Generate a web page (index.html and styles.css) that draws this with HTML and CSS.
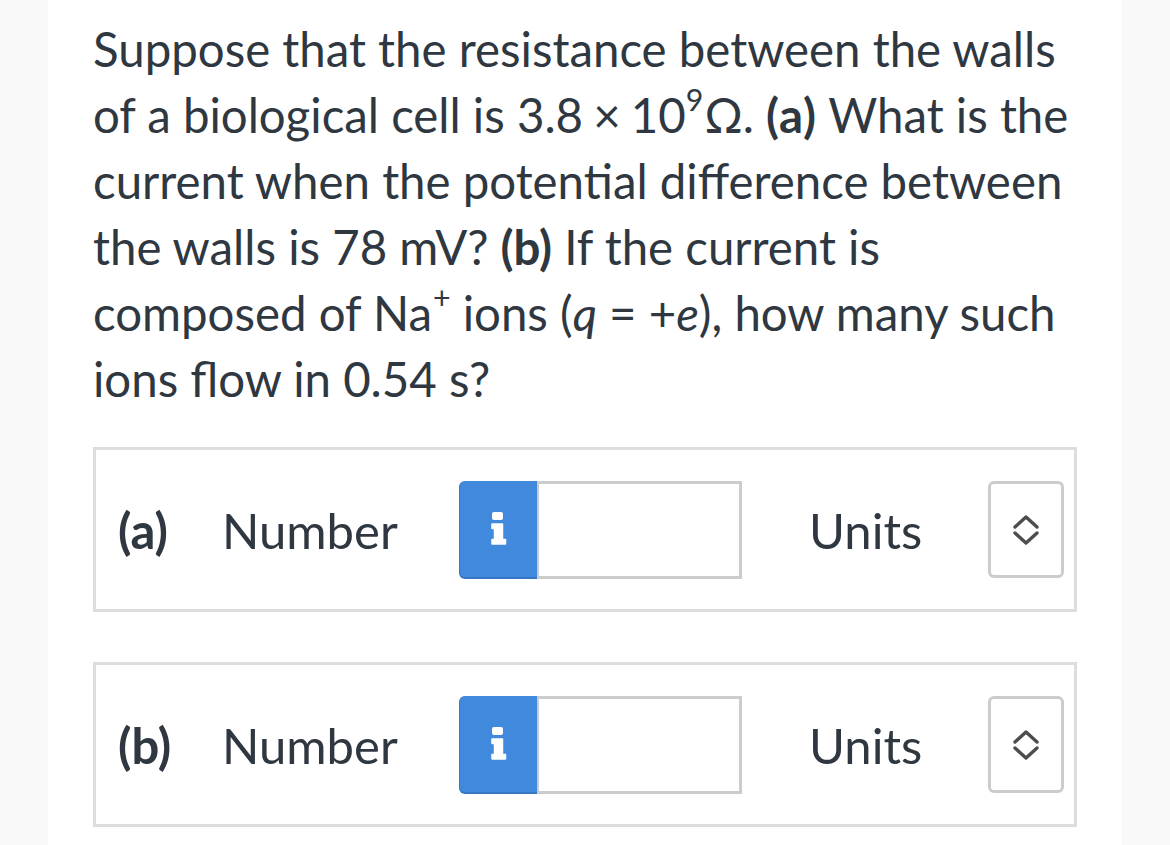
FILE: index.html
```html
<!DOCTYPE html>
<html lang="en">
<head>
<meta charset="utf-8">
<title>Question</title>
<link rel="stylesheet" href="styles.css">
</head>
<body>
<main class="sheet">
  <p class="question">Suppose that the resistance between the walls of a biological cell is <span class="math">3.8 × 10<sup class="sup">9</sup><span class="ohm">Ω</span></span>. <b>(a)</b> What is the current when the potential difference between the walls is 78 mV? <b>(b)</b> If the current is composed of Na<sup class="sup plus">+</sup> ions (<i>q</i> = +<i>e</i>), how many such ions flow in 0.54 s?</p>

  <section class="part">
    <span class="part-label">(a)</span>
    <span class="part-kind">Number</span>
    <span class="info-btn">
      <svg class="info-icon" width="16" height="33" viewBox="0 0 16 33" aria-hidden="true">
        <rect x="1" y="0" width="11" height="8" rx="2" fill="#fff"/>
        <path d="M1 12 H11.5 V27.5 H14.5 V32 H1 V27.5 H3.5 V16.5 H1 Z" fill="#fff" stroke="#fff" stroke-width="1.5" stroke-linejoin="round"/>
      </svg>
    </span>
    <span class="answer-input"></span>
    <span class="units-label">Units</span>
    <span class="units-select">
      <svg width="28" height="34" viewBox="0 0 28 34" aria-hidden="true">
        <path d="M3 14 L14 4 L25 14" fill="none" stroke="#4d4d4d" stroke-width="3.4" stroke-linecap="round" stroke-linejoin="round"/>
        <path d="M3 20 L14 30 L25 20" fill="none" stroke="#4d4d4d" stroke-width="3.4" stroke-linecap="round" stroke-linejoin="round"/>
      </svg>
    </span>
  </section>

  <section class="part">
    <span class="part-label">(b)</span>
    <span class="part-kind">Number</span>
    <span class="info-btn">
      <svg class="info-icon" width="16" height="33" viewBox="0 0 16 33" aria-hidden="true">
        <rect x="1" y="0" width="11" height="8" rx="2" fill="#fff"/>
        <path d="M1 12 H11.5 V27.5 H14.5 V32 H1 V27.5 H3.5 V16.5 H1 Z" fill="#fff" stroke="#fff" stroke-width="1.5" stroke-linejoin="round"/>
      </svg>
    </span>
    <span class="answer-input"></span>
    <span class="units-label">Units</span>
    <span class="units-select">
      <svg width="28" height="34" viewBox="0 0 28 34" aria-hidden="true">
        <path d="M3 14 L14 4 L25 14" fill="none" stroke="#4d4d4d" stroke-width="3.4" stroke-linecap="round" stroke-linejoin="round"/>
        <path d="M3 20 L14 30 L25 20" fill="none" stroke="#4d4d4d" stroke-width="3.4" stroke-linecap="round" stroke-linejoin="round"/>
      </svg>
    </span>
  </section>
</main>
</body>
</html>
```

FILE: styles.css
```css
html, body {
  margin: 0;
  padding: 0;
  background: #f9f9f9;
}

body {
  font-family: Lato, "Noto Sans", sans-serif;
  color: #2f3741;
}

.sheet {
  margin-left: 48px;
  width: 1074px;
  min-height: 845px;
  box-sizing: border-box;
  background: #ffffff;
  padding: 16px 45px 0 45px;
}

.question {
  margin: 0 0 35px 0;
  font-size: 47.4px;
  line-height: 66px;
}

.question b {
  font-weight: 700;
}

.math {
  word-spacing: -2px;
}

.sup {
  font-size: 0.64em;
  line-height: 0;
  vertical-align: 0.74em;
}

.sup.plus {
  margin-left: 1px;
}

.ohm {
  margin-left: 1px;
}

.part {
  display: flex;
  align-items: center;
  height: 165px;
  box-sizing: border-box;
  border: 3px solid #dddddd;
  margin-bottom: 50px;
  padding-left: 22px;
  font-size: 49px;
}

.part-label {
  width: 104px;
  font-weight: 700;
}

.part-kind {
  width: 237px;
}

.info-btn {
  width: 78px;
  height: 98px;
  box-sizing: border-box;
  display: flex;
  align-items: center;
  justify-content: center;
  background: #4189dc;
  border-radius: 6px 0 0 6px;
  border-bottom: 2px solid #3778c4;
  border-left: 1px solid #3778c4;
}

.answer-input {
  width: 205px;
  height: 98px;
  box-sizing: border-box;
  border: 3px solid #cccccc;
  border-left-width: 2px;
  background: #ffffff;
}

.units-label {
  width: 246px;
  box-sizing: border-box;
  padding-left: 67px;
}

.units-select {
  width: 76px;
  height: 97px;
  box-sizing: border-box;
  border: 3px solid #cccccc;
  border-radius: 6px;
  display: flex;
  align-items: center;
  justify-content: center;
}
```
